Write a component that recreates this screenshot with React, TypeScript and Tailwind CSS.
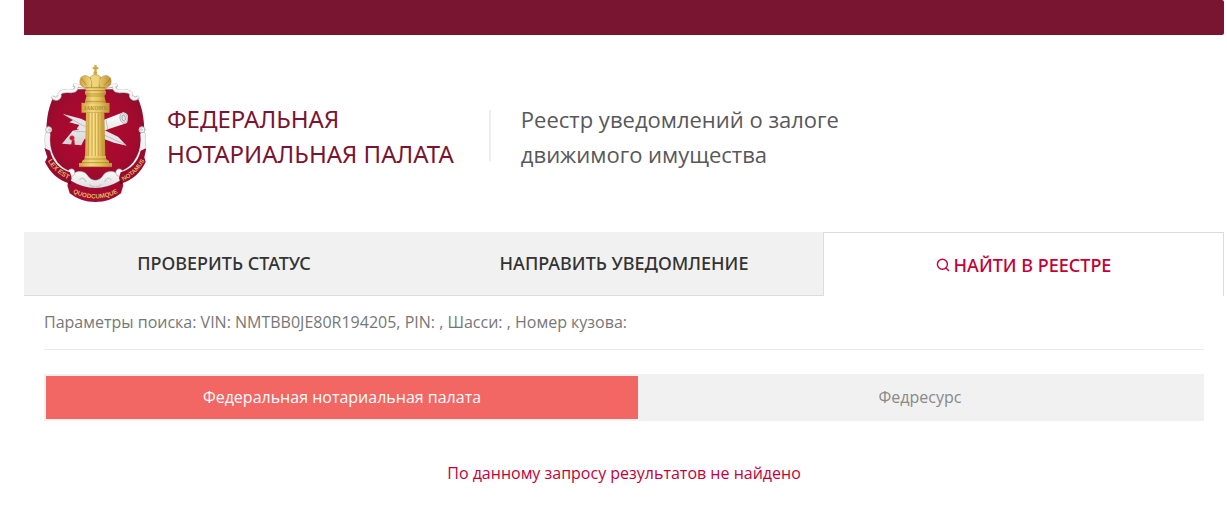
function Emblem() {
  return (
    <svg
      viewBox="30 27 306 414"
      className="h-[138px] w-[102px] shrink-0"
      role="img"
      aria-label="Эмблема Федеральной нотариальной палаты"
    >
      <defs>
        <linearGradient id="gold" x1="0" x2="1" y1="0" y2="0">
          <stop offset="0" stopColor="#cfa23f" />
          <stop offset="0.35" stopColor="#f1d77c" />
          <stop offset="0.65" stopColor="#e6c45f" />
          <stop offset="1" stopColor="#bd9034" />
        </linearGradient>
        <radialGradient id="field" cx="0.5" cy="0.45" r="0.6">
          <stop offset="0" stopColor="#b30a30" />
          <stop offset="0.7" stopColor="#a30a2e" />
          <stop offset="1" stopColor="#860f2c" />
        </radialGradient>
        <linearGradient id="silver" x1="0" x2="0" y1="0" y2="1">
          <stop offset="0" stopColor="#ffffff" />
          <stop offset="1" stopColor="#d3d3d6" />
        </linearGradient>
        <path id="mottoLeft" d="M41 315 Q64 354 108 372" />
        <path id="mottoCenter" d="M107 405 Q184 450 262 405" />
        <path id="mottoRight" d="M268 375 Q312 353 338 303" />
      </defs>

      {/* shield */}
      <path
        d="M55 130 C42 160 34 200 38 262 C48 322 84 358 130 366 L184 382 L238 366 C284 358 320 322 330 262 C334 200 326 160 313 130 C298 128 288 120 286 108 C266 112 250 106 240 100 H128 C118 106 102 112 82 108 C80 120 70 128 55 130Z"
        fill="url(#field)"
      />

      {/* silver lower frame */}
      <g fill="none" strokeLinecap="round" strokeLinejoin="round">
        <path
          d="M41 236 C37 270 46 300 64 324 C80 343 96 351 112 355 M327 236 C331 270 322 300 304 324 C288 343 272 351 256 355"
          stroke="#bcbcc0"
          strokeWidth="17"
        />
        <path
          d="M41 236 C37 270 46 300 64 324 C80 343 96 351 112 355 M327 236 C331 270 322 300 304 324 C288 343 272 351 256 355"
          stroke="#f3f3f5"
          strokeWidth="14"
        />
        <circle cx="44" cy="221" r="9" fill="#f5f5f6" stroke="#b9b9bd" strokeWidth="3" />
        <circle cx="324" cy="221" r="9" fill="#f5f5f6" stroke="#b9b9bd" strokeWidth="3" />
        <circle cx="46" cy="221" r="3" stroke="#b9b9bd" strokeWidth="2" />
        <circle cx="322" cy="221" r="3" stroke="#b9b9bd" strokeWidth="2" />
      </g>
      <path
        d="M102 346 C108 334 124 338 122 351 C134 344 152 345 160 358 C168 370 176 373 184 373 C192 373 200 370 208 358 C216 345 234 344 246 351 C244 338 260 334 266 346 L268 378 L184 412 L100 378Z"
        fill="url(#silver)"
        stroke="#b9b9bd"
        strokeWidth="2"
      />
      <path
        d="M122 351 Q122 362 110 360 M246 351 Q246 362 258 360 M136 372 Q148 358 156 378 M232 372 Q220 358 212 378 M166 386 Q184 400 202 386"
        fill="none"
        stroke="#bdbdc1"
        strokeWidth="3"
      />

      {/* silver top scrolls */}
      <g fill="none" strokeLinecap="round" strokeLinejoin="round">
        <path
          d="M57 124 C64 133 82 128 76 114 C84 102 96 106 112 106 C128 106 132 92 122 88 C132 88 140 92 152 93 M311 124 C304 133 286 128 292 114 C284 102 272 106 256 106 C240 106 236 92 246 88 C236 88 228 92 216 93"
          stroke="#b3b3b7"
          strokeWidth="11"
        />
        <path
          d="M57 123 C64 132 82 127 76 113 C84 101 96 105 112 105 C128 105 132 91 122 87 C132 87 140 91 152 92 M311 123 C304 132 286 127 292 113 C284 101 272 105 256 105 C240 105 236 91 246 87 C236 87 228 91 216 92"
          stroke="#f7f7f8"
          strokeWidth="8"
        />
        <path d="M58 121 Q66 127 70 119 M118 99 Q125 96 120 90 M310 121 Q302 127 298 119 M250 99 Q243 96 248 90" stroke="#a9a9ad" strokeWidth="2" />
      </g>

      {/* quill and scroll */}
      <path d="M87 174 L141 188 L252 242 L278 269 L240 260 L128 218 L136 207 L106 199 L117 192Z" fill="#e6e6e8" />
      <path d="M89 175 L140 205 L276 267" stroke="#a9a9ad" strokeWidth="2" fill="none" />
      <path d="M84 263 L116 224 L153 216 L214 190 L268 169 Q284 171 282 188 L279 201 L222 220 L151 250 L142 268Z" fill="url(#silver)" />
      <path d="M216 191 L221 219 M122 225 L158 228" stroke="#aaaaae" strokeWidth="2" fill="none" />
      <ellipse cx="269" cy="186" rx="11" ry="16" fill="#e9e9eb" stroke="#96969b" strokeWidth="2" transform="rotate(-12 269 186)" />
      <ellipse cx="269" cy="186" rx="5" ry="9" fill="none" stroke="#8c8c91" strokeWidth="2" transform="rotate(-12 269 186)" />
      <path d="M115 249 l-5 22 7 -3 6 4 -2 -21Z" fill="#b4112f" />
      <circle cx="114" cy="246" r="7" fill="#c8152e" stroke="#dc4b58" strokeWidth="2" />

      {/* column */}
      <path d="M156 169 H211 L214 303 H153Z" fill="url(#gold)" />
      <path d="M165 171 L163 300 M174 171 V300 M184 171 V300 M193 171 V300 M203 171 L205 300" stroke="#c0943a" strokeWidth="2" />
      <path d="M169 171 L168 300 M179 171 V300 M188 171 V300" stroke="#ffeb9b" strokeWidth="2" />
      <path d="M152 300 H216 V309 L225 315 V321 H234 V333 H135 V321 H144 V315 L152 309Z" fill="url(#gold)" />
      <path d="M151 309 H217 M143 320 H226 M135 332 H234" stroke="#a87b24" strokeWidth="2" />
      <path d="M153 105 H216 V114 L211 119 L215 136 V142 H153 V136 L158 119 L153 114Z" fill="url(#gold)" />
      <path d="M153 114 H215 M158 120 H211 M154 136 H215" stroke="#a87b24" strokeWidth="2" />
      <rect x="143" y="141" width="83" height="29" fill="url(#gold)" stroke="#b99343" />
      <text x="184" y="161" textAnchor="middle" fontFamily="Liberation Serif, serif" fontSize="17" fontWeight="700" fill="#b08a3c">
        ЗАКОНЪ
      </text>

      {/* crown */}
      <path
        d="M156 104 L153 95 C139 92 136 82 138 72 C140 58 158 54 167 65 Q174 56 184 55 Q195 56 202 65 C211 54 229 58 231 72 C233 82 229 92 216 95 L213 104Z"
        fill="url(#gold)"
        stroke="#b08a3e"
        strokeWidth="1.5"
      />
      <path
        d="M167 63 C174 73 175 84 172 94 M202 63 C193 73 194 84 197 94 M142 67 L158 88 M230 67 L211 88 M154 95 H215"
        stroke="#94743a"
        strokeWidth="2"
        fill="none"
      />
      <path d="M171 68 Q179 60 184 58 Q190 60 198 68 L194 91 H175Z" fill="#f0d67e" opacity="0.7" />
      <circle cx="184" cy="51" r="6" fill="#d2a94a" />
      <path d="M181 27 H188 V33 H193 V40 H188 V47 H181 V40 H176 V33 H181Z" fill="#d2a94a" />

      {/* ribbon */}
      <path d="M31 276 L48 284 C56 318 78 340 108 349 L113 366 L108 383 C74 374 48 350 33 318 L40 304Z" fill="#970b2e" />
      <path d="M337 276 L320 284 C312 318 290 340 260 349 L255 366 L260 383 C294 374 320 350 335 318 L331 304Z" fill="#970b2e" />
      <path d="M108 373 Q184 419 260 373 L268 388 L261 412 Q229 438 184 438 Q139 438 107 412 L100 388Z" fill="#a20b30" />
      <path d="M100 385 L108 373 L112 384Z M268 385 L260 373 L256 384Z" fill="#65091e" />
      <g fontFamily="Liberation Sans, sans-serif" fontSize="20" fontWeight="700" fill="#e2b566">
        <text>
          <textPath href="#mottoLeft">LEX EST</textPath>
        </text>
        <text fontSize="19">
          <textPath href="#mottoCenter" startOffset="50%" textAnchor="middle">
            QUODCUMQUE
          </textPath>
        </text>
        <text fontSize="18">
          <textPath href="#mottoRight">NOTAMUS</textPath>
        </text>
      </g>
    </svg>
  );
}

function SearchIcon() {
  return (
    <svg viewBox="0 0 14 14" className="size-3.5 shrink-0" fill="none" stroke="currentColor" strokeWidth="1.4" aria-hidden="true">
      <circle cx="6.4" cy="6.3" r="5" />
      <path d="M9.5 9.5 L13 13" />
    </svg>
  );
}

const navLink =
  "flex h-16 items-center justify-center border-b border-[#dcdcdc] bg-[#f1f1f1] pb-px font-['Noto_Sans',sans-serif] text-lg font-medium text-[#333333]";

export default function App() {
  return (
    <div className="bg-white pr-[3px] pl-6 font-['Open_Sans','Noto_Sans',sans-serif]">
      <div className="h-[35px] rounded-r-xs bg-[#7a1531]" />

      <header className="flex items-start px-5 pt-[30px] pb-[29px]">
        <Emblem />
        <a
          href="#"
          className="mt-9 ml-[21px] font-['Noto_Sans',sans-serif] text-2xl leading-[35px] whitespace-nowrap text-[#7a1531]"
        >
          ФЕДЕРАЛЬНАЯ
          <br />
          НОТАРИАЛЬНАЯ ПАЛАТА
        </a>
        <div className="mt-[45px] ml-[35px] h-[51px] w-0.5 bg-[#ececec]" />
        <h1 className="mt-[37px] ml-[30px] text-[22px] leading-[35px] whitespace-nowrap text-[#58585a]">
          Реестр уведомлений о залоге
          <br />
          движимого имущества
        </h1>
      </header>

      <nav className="grid grid-cols-3">
        <a href="#status" className={navLink}>
          ПРОВЕРИТЬ СТАТУС
        </a>
        <a href="#notify" className={navLink}>
          НАПРАВИТЬ УВЕДОМЛЕНИЕ
        </a>
        <a
          href="#search"
          aria-current="page"
          className="-ml-px flex h-16 items-center justify-center gap-1 border-x border-t border-[#dcdcdc] bg-white font-['Noto_Sans',sans-serif] text-lg font-medium text-[#c40038]"
        >
          <SearchIcon />
          НАЙТИ В РЕЕСТРЕ
        </a>
      </nav>

      <main className="px-5">
        <p className="border-b border-[#ebebeb] pt-3.5 pb-[15px] text-base text-[#777777]">
          Параметры поиска: VIN: NMTBB0JE80R194205, PIN: , Шасси: , Номер кузова:
        </p>

        <div role="tablist" className="mt-6 flex h-[47px] bg-[#f1f1f1] p-0.5 text-base">
          <button type="button" role="tab" aria-selected="true" className="basis-[592px] bg-[#f26663] pb-0.5 text-white">
            Федеральная нотариальная палата
          </button>
          <button type="button" role="tab" aria-selected="false" className="flex-1 pb-0.5 text-[#888888]">
            Федресурс
          </button>
        </div>

        <p className="mt-10 text-center text-base text-[#c40038]">По данному запросу результатов не найдено</p>
      </main>
    </div>
  );
}
